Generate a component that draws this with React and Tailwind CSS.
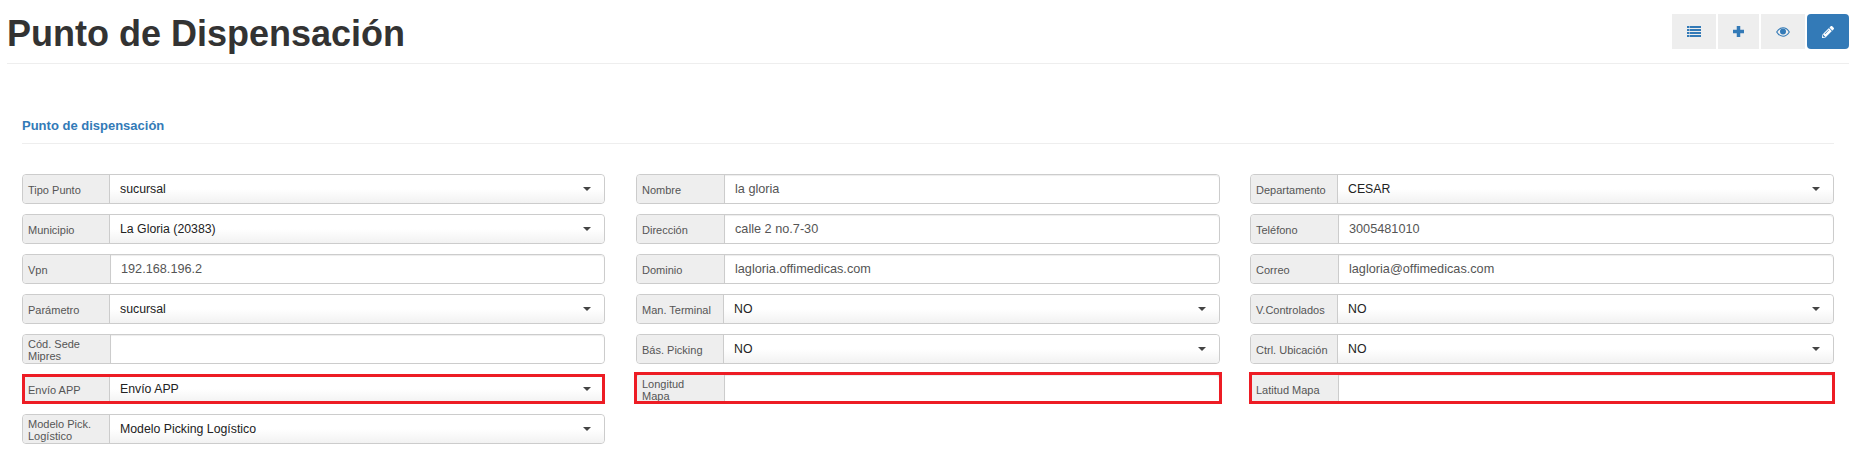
import React from 'react';
import { FaPencilAlt } from 'react-icons/fa';

const columns = [
  [
    { label: 'Tipo Punto', value: 'sucursal', select: true },
    { label: 'Municipio', value: 'La Gloria (20383)', select: true },
    { label: 'Vpn', value: '192.168.196.2' },
    { label: 'Parámetro', value: 'sucursal', select: true },
    { label: 'Cód. Sede\nMipres', value: '' },
    { label: 'Envío APP', value: 'Envío APP', select: true, mark: '-inset-x-px -inset-y-px' },
    { label: 'Modelo Pick.\nLogístico', value: 'Modelo Picking Logístico', select: true },
  ],
  [
    { label: 'Nombre', value: 'la gloria' },
    { label: 'Dirección', value: 'calle 2 no.7-30' },
    { label: 'Dominio', value: 'lagloria.offimedicas.com' },
    { label: 'Man. Terminal', value: 'NO', select: true },
    { label: 'Bás. Picking', value: 'NO', select: true },
    { label: 'Longitud\nMapa', value: '', mark: '-left-[3px] -right-[3px] -top-[3px] -bottom-px' },
  ],
  [
    { label: 'Departamento', value: 'CESAR', select: true },
    { label: 'Teléfono', value: '3005481010' },
    { label: 'Correo', value: 'lagloria@offimedicas.com' },
    { label: 'V.Controlados', value: 'NO', select: true },
    { label: 'Ctrl. Ubicación', value: 'NO', select: true },
    { label: 'Latitud Mapa', value: '', mark: '-left-[2px] -right-[2px] -top-[3px] -bottom-px' },
  ],
];

const Field = ({ label, value, select, mark }) => (
  <div className="relative flex h-[30px] rounded border border-[#ccc]">
    <div className={`flex shrink-0 items-center rounded-l border-r border-[#ccc] bg-[#eee] pl-[5px] pt-px text-[11px] leading-[12px] whitespace-pre-line text-[#555] ${select ? 'w-[87px]' : 'w-[88px]'}`}>
      {label}
    </div>
    {select ? (
      <div className="flex flex-1 items-center justify-between rounded-r bg-gradient-to-b from-white from-50% to-[#f2f2f2] pl-[10px] pr-[13px] text-[12.3px] text-[#222]">
        <span>{value}</span>
        <span className="border-x-[4px] border-t-[4px] border-x-transparent border-t-[#444]"></span>
      </div>
    ) : (
      <div className="flex flex-1 items-center rounded-r bg-white pl-[10px] pt-[2px] text-[12.7px] text-[#555] shadow-[inset_0_1px_1px_rgba(0,0,0,0.075)]">
        {value}
      </div>
    )}
    {/* Red annotation drawn over the field */}
    {mark && <div className={`absolute border-[3px] border-[#ed1c24] ${mark}`}></div>}
  </div>
);

const ListIcon = () => (
  <svg width="14" height="11" viewBox="0 0 14 11" fill="currentColor">
    <rect x="0" y="0" width="2.5" height="2" />
    <rect x="3" y="0" width="11" height="2" />
    <rect x="0" y="3" width="2.5" height="2" />
    <rect x="3" y="3" width="11" height="2" />
    <rect x="0" y="6" width="2.5" height="2" />
    <rect x="3" y="6" width="11" height="2" />
    <rect x="0" y="9" width="2.5" height="2" />
    <rect x="3" y="9" width="11" height="2" />
  </svg>
);

const PlusIcon = () => (
  <svg width="11" height="11" viewBox="0 0 11 11" fill="currentColor">
    <rect x="3.75" y="0" width="3.5" height="11" />
    <rect x="0" y="3.75" width="11" height="3.5" />
  </svg>
);

const EyeIcon = () => (
  <svg width="14" height="10" viewBox="0 0 14 10" fill="currentColor">
    <path d="M0.7 5C2.5 2 4.7 0.8 7 0.8S11.5 2 13.3 5C11.5 8 9.3 9.2 7 9.2S2.5 8 0.7 5Z" fill="none" stroke="currentColor" strokeWidth="1.1" />
    <circle cx="7" cy="4.4" r="3" />
  </svg>
);

export default function App() {
  return (
    <div className="h-[451px] overflow-hidden bg-white pl-[7px] pr-[6px] font-['Liberation_Sans',Arial,sans-serif]">
      {/* Header */}
      <div className="flex h-[64px] items-start justify-between border-b border-[#eee]">
        <h1 className="mt-[14px] text-[36px] leading-[40px] font-bold text-[#333]">Punto de Dispensación</h1>
        <div className="mt-[14px] flex gap-[2px]">
          <button className="flex h-[35px] w-[44px] items-center justify-center bg-[#eee] text-[#337ab7]">
            <ListIcon />
          </button>
          <button className="flex h-[35px] w-[41px] items-center justify-center bg-[#eee] text-[#337ab7]">
            <PlusIcon />
          </button>
          <button className="flex h-[35px] w-[44px] items-center justify-center bg-[#eee] text-[#337ab7]">
            <EyeIcon />
          </button>
          <button className="flex h-[35px] w-[42px] items-center justify-center rounded bg-[#337ab7] text-white">
            <FaPencilAlt size={12} />
          </button>
        </div>
      </div>

      {/* Section */}
      <div className="px-[15px]">
        <div className="mt-[54px] h-[26px] border-b border-[#eee] text-[13px] leading-[16px] font-bold text-[#337ab7]">
          Punto de dispensación
        </div>
        <div className="mt-[30px] grid grid-cols-3 gap-x-[30px]">
          {columns.map((fields, i) => (
            <div key={i} className={`flex flex-col gap-[10px] ${i === 0 ? 'pr-px' : ''}`}>
              {fields.map(field => (
                <Field key={field.label} {...field} />
              ))}
            </div>
          ))}
        </div>
      </div>
    </div>
  );
}
